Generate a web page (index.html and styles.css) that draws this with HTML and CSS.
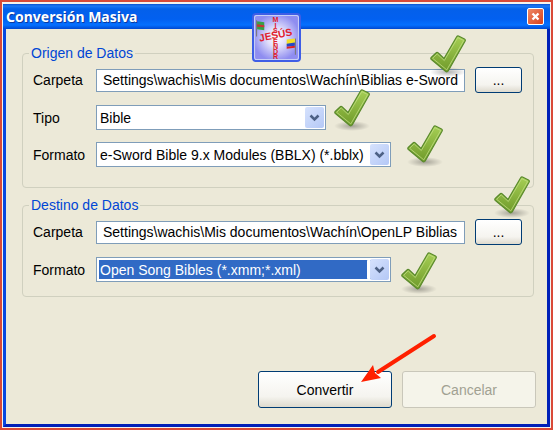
FILE: index.html
```html
<!DOCTYPE html>
<html lang="es">
<head>
<meta charset="utf-8">
<title>Conversión Masiva</title>
<link rel="stylesheet" href="styles.css">
</head>
<body>
<svg class="defs" width="0" height="0" aria-hidden="true">
  <defs>
    <linearGradient id="leaf" x1="0" y1="0" x2="0" y2="1">
      <stop offset="0" stop-color="#a6cf55"/>
      <stop offset="1" stop-color="#6f9a2a"/>
    </linearGradient>
    <radialGradient id="shade">
      <stop offset="0" stop-color="#000" stop-opacity=".3"/>
      <stop offset="1" stop-color="#000" stop-opacity="0"/>
    </radialGradient>
    <symbol id="check" viewBox="0 0 37 42">
      <ellipse cx="18" cy="37" rx="18" ry="5" fill="url(#shade)"/>
      <path d="M1.2 22.5 6.5 17.5Q7.3 17 8 17.8L14 23.5 26.5 2Q27.5.5 29 1.2L34.5 4Q35.8 4.800 35 6.300L18.200 36Q17 37.500 15.500 36.300L1.400 24.500Q.3 23.500 1.200 22.500Z" fill="url(#leaf)" stroke="#5a8a2c" stroke-width="1.200"/>
      <path d="M2.600 23.300 7.200 18.900 14.300 25.500 27.800 2.600 33.700 5.500 16.800 34.900Z" fill="none" stroke="#c3df86" stroke-width="1" stroke-opacity=".75"/>
    </symbol>
    <symbol id="chevron" viewBox="0 0 19 21">
      <path d="M5.500 8.500 9.500 12.500 13.500 8.500" fill="none" stroke="#4d6185" stroke-width="2.500"/>
    </symbol>
  </defs>
</svg>
<main class="window">
  <header class="titlebar">
    <h1>Conversión Masiva</h1>
    <button class="close" type="button" aria-label="Cerrar"><svg viewBox="0 0 15 15"><path d="M4.500 4.500 10.500 10.500M10.500 4.500 4.500 10.500" stroke="#fff" stroke-width="2.400"/></svg></button>
    <svg class="logo" viewBox="0 0 48 48" role="img" aria-label="Misendr Jesús">
      <defs>
        <radialGradient id="glow"><stop offset="0" stop-color="#fff"/><stop offset=".4" stop-color="#e2e0fb"/><stop offset="1" stop-color="#8f8df0"/></radialGradient>
      </defs>
      <rect x="1" y="1" width="46" height="46" rx="3" fill="url(#glow)" stroke="#3f5ee6" stroke-width="2"/>
      <rect x="2.500" y="2.500" width="43" height="43" rx="2" fill="none" stroke="#c9d0f6"/>
      <path d="M4.500 7V23M42.500 25V41" stroke="#777" stroke-width="1"/>
      <path d="M5 8 12 9V17L5 16Z" fill="#36a047"/><path d="M5 11 12 12V14L5 13.500Z" fill="#c33"/>
      <path d="M34 26 42 25V30L34 31Z" fill="#f3df28"/><path d="M34 30 42 29V32L34 33Z" fill="#2747c5"/><path d="M34 33 42 32V34L34 35Z" fill="#d22"/>
      <g class="logo-text">
        <text x="23" y="9">M</text><text x="23" y="15">I</text><text x="23" y="20">S</text><text x="23" y="30">E</text><text x="23" y="35">N</text><text x="23" y="40">D</text><text x="23" y="45">R</text>
        <text class="logo-name" x="23" y="25" transform="rotate(-11 23 21)">JESÚS</text>
      </g>
    </svg>
  </header>
  <form class="content">
    <fieldset>
      <legend>Origen de Datos</legend>
      <div class="rows">
        <label for="src">Carpeta</label>
        <div class="field">
          <input id="src" type="text" value="Settings\wachis\Mis documentos\Wachín\Biblias e-Sword">
          <svg class="check over"><use href="#check"/></svg>
        </div>
        <button class="btn browse" type="button">...</button>
        <label for="kind">Tipo</label>
        <div class="field combo short">
          <select id="kind"><option>Bible</option></select>
          <svg class="arrow"><use href="#chevron"/></svg>
          <svg class="check near"><use href="#check"/></svg>
        </div>
        <label for="srcfmt">Formato</label>
        <div class="field combo">
          <select id="srcfmt"><option>e-Sword Bible 9.x Modules (BBLX) (*.bblx)</option></select>
          <svg class="arrow"><use href="#chevron"/></svg>
          <svg class="check far"><use href="#check"/></svg>
        </div>
      </div>
    </fieldset>
    <fieldset>
      <legend>Destino de Datos</legend>
      <div class="rows">
        <label for="dst">Carpeta</label>
        <div class="field">
          <input id="dst" type="text" value="Settings\wachis\Mis documentos\Wachín\OpenLP Biblias">
        </div>
        <div class="field">
          <button class="btn browse" type="button">...</button>
          <svg class="check corner"><use href="#check"/></svg>
        </div>
        <label for="dstfmt">Formato</label>
        <div class="field combo active">
          <select id="dstfmt"><option>Open Song Bibles (*.xmm;*.xml)</option></select>
          <svg class="arrow"><use href="#chevron"/></svg>
          <svg class="check low"><use href="#check"/></svg>
        </div>
      </div>
    </fieldset>
    <footer>
      <div class="field">
        <button class="btn wide" type="button">Convertir</button>
        <svg class="pointer" viewBox="0 0 78 52" aria-hidden="true"><path d="M74 4 18 40" stroke="#ff2000" stroke-width="4" stroke-linecap="round"/><path d="M1 50 13 33 15 41 21 46Z" fill="#ff2000"/></svg>
      </div>
      <button class="btn wide" type="button" disabled>Cancelar</button>
    </footer>
  </form>
</main>
</body>
</html>
```
FILE: styles.css
```css
* { box-sizing: border-box; }

body {
  margin: 0;
  min-height: 100vh;
  display: flex;
  padding: 2px 1px 1px;
  border: 2px solid #d94a38;
  background:
    linear-gradient(#0000 85px, #223 85px 86px, #0000 86px 90px, #223 90px 91px, #0000 91px 114px, #6aa0f0 114px 115px, #0000 115px 130px, #223 130px 138px, #0000 138px 153px, #223 153px 154px, #0000 154px 172px, #6ab0f0 172px 184px, #0000 184px 369px, #223 369px 375px, #0000 375px) right / 1px 100% no-repeat,
    #f4f3ee;
  font: 14px/16px "Liberation Sans", Arial, sans-serif;
  color: #000;
}

.defs { position: absolute; }

.window {
  flex: 1;
  display: flex;
  flex-direction: column;
  border: 3px solid #0848e0;
  border-top: 0;
  border-right-color: #0020b8;
  border-bottom-color: #0020b8;
  background: #ece9d8;
}

.titlebar {
  position: relative;
  display: flex;
  align-items: center;
  justify-content: space-between;
  height: 25px;
  margin: 0 -3px;
  padding: 0 3px;
  background: linear-gradient(#0a50d0 0, #1c78f4 2px, #0460ea 5px, #0260f0 15px, #0470ff 21px, #0048d0 25px);
}

h1 {
  margin: 0;
  color: #fff;
  font: bold 14px/16px "Noto Sans", "Open Sans", sans-serif;
  text-shadow: 1px 1px #0a3aa0;
}

.close {
  width: 17px;
  height: 17px;
  margin-right: 3px;
  padding: 0;
  border: 1px solid #fff;
  border-radius: 2px;
  background: linear-gradient(135deg, #ee8a68, #d8401c);
}

.close svg { display: block; width: 15px; height: 15px; }

.logo {
  position: absolute;
  left: calc(50% - 25px);
  top: 9px;
  width: 49px;
  height: 49px;
}

.logo-text {
  fill: #e0202c;
  font: bold 7px "Liberation Sans", sans-serif;
  text-anchor: middle;
}

.logo-name { font-size: 10px; }

.content {
  flex: 1;
  display: flex;
  flex-direction: column;
  padding: 16px 13px 16px 16px;
}

fieldset {
  min-width: 0;
  margin: 0 0 9px;
  padding: 6px 11px 20px 10px;
  border: 1px solid #d0d0bf;
  border-radius: 4px;
}

fieldset + fieldset { padding-bottom: 14px; }

legend {
  margin-left: -4px;
  padding: 0 2px;
  color: #0046d5;
}

.rows {
  display: grid;
  grid-template-columns: 63px 1fr 47px;
  row-gap: 12px;
  align-items: center;
}

.rows label { grid-column: 1; }

.field { position: relative; }

.rows input {
  display: block;
  width: calc(100% - 10px);
  height: 23px;
  padding: 0 6px;
  border: 1px solid #7f9db9;
  background: #fff;
  color: #000;
  font: inherit;
}

.combo { width: 295px; }
.combo.short { width: 230px; }

select {
  display: block;
  width: 100%;
  height: 25px;
  padding: 0 24px 0 3px;
  border: 1px solid #7f9db9;
  border-radius: 0;
  appearance: none;
  background: #fff;
  color: #000;
  font: inherit;
}

.active select {
  background: #316ac5;
  box-shadow: inset 0 0 0 2px #fff;
  color: #fff;
}

.arrow {
  position: absolute;
  top: 2px;
  right: 2px;
  width: 19px;
  height: 21px;
  border-radius: 2px;
  background: linear-gradient(135deg, #d6e2fd, #b4c8f6);
}

.active .arrow { box-shadow: -3px 0 #fff; }

.check {
  position: absolute;
  z-index: 1;
  width: 37px;
  height: 42px;
  pointer-events: none;
}

.over { right: 8px; bottom: 15px; }
.near { left: calc(100% + 8px); bottom: -1px; }
.far { left: calc(100% + 16px); bottom: 0; }
.low { left: calc(100% + 10px); bottom: -12px; }
.corner { right: -9px; bottom: 27px; }

.btn {
  padding: 0;
  border: 1px solid #003c74;
  border-radius: 3px;
  background: linear-gradient(#fff, #f5f4ef 70%, #dedace);
  color: #000;
  font: inherit;
}

.browse { display: block; width: 47px; height: 26px; }
.wide { display: block; width: 134px; height: 37px; }

.btn:disabled {
  border-color: #c9c7ba;
  background: #f5f4ea;
  color: #a1a192;
}

footer {
  display: flex;
  justify-content: flex-end;
  gap: 10px;
  margin: auto -2px 0 0;
}

.pointer {
  position: absolute;
  left: 102px;
  bottom: 24px;
  width: 78px;
  height: 52px;
}
```
